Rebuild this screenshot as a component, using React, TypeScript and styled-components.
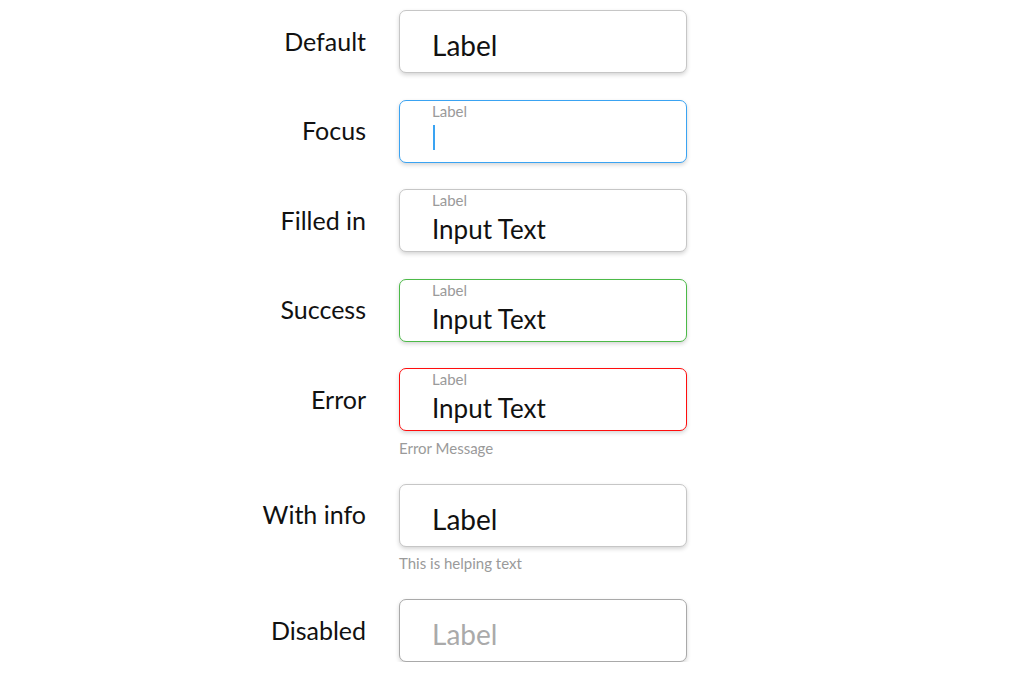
import React from 'react'
import styled, { createGlobalStyle, css } from 'styled-components'

type Status = 'default' | 'focus' | 'success' | 'error' | 'disabled'

const GlobalStyle = createGlobalStyle`
  body {
    margin: 0;
    background: #fff;
    font-family: Lato, "Open Sans", sans-serif;
    color: #111;
  }
`

const borderColors: Record<Status, string> = {
  default: '#c6c6c6',
  focus: '#3aa3f2',
  success: '#4cba48',
  error: '#ff0d0d',
  disabled: '#a9a9a9',
}

const Page = styled.div`
  display: flex;
  flex-direction: column;
  gap: 26.5px;
  padding: 10px 0 0 246px;
`

const Row = styled.div`
  display: grid;
  grid-template-columns: 120px 288px;
  column-gap: 33px;
  align-items: start;
`

const RowLabel = styled.div`
  height: 63px;
  display: flex;
  align-items: center;
  justify-content: flex-end;
  padding-bottom: 2px;
  box-sizing: border-box;
  font-size: 25px;
  color: #111;
`

const Field = styled.div`
  display: flex;
  flex-direction: column;
`

const Box = styled.div<{ $status: Status }>`
  box-sizing: border-box;
  width: 288px;
  height: 63px;
  border: 1.6px solid ${(p) => borderColors[p.$status]};
  border-radius: 7px;
  background: #fff;
  box-shadow: 0 2px 4px rgba(0, 0, 0, 0.17);
  padding: 1px 0 0 32px;
  display: flex;
  flex-direction: column;
`

const SmallLabel = styled.div`
  font-size: 15px;
  line-height: 18px;
  color: #9a9a9a;
`

const Value = styled.div`
  font-size: 26px;
  line-height: 30px;
  margin-top: 5px;
  color: #111;
  display: flex;
  align-items: flex-end;
`

const Placeholder = styled.div<{ $disabled?: boolean }>`
  font-size: 28px;
  line-height: 28px;
  margin-top: 19px;
  ${(p) =>
    p.$disabled
      ? css`
          color: #aaa;
        `
      : css`
          color: #111;
        `}
`

const Cursor = styled.span`
  display: inline-block;
  width: 1.5px;
  height: 25px;
  background: #3aa3f2;
  margin: 0 0 0 1px;
`

const Helper = styled.div`
  font-size: 15px;
  line-height: 17.5px;
  margin-top: 8.5px;
  color: #9a9a9a;
`

interface InputProps {
  status: Status
  label?: string
  value?: string
  placeholder?: string
  caret?: boolean
}

function TextInput(props: InputProps): React.ReactElement {
  const { status, label, value, placeholder, caret } = props
  return (
    <Box $status={status}>
      {placeholder ? (
        <Placeholder $disabled={status === 'disabled'}>{placeholder}</Placeholder>
      ) : (
        <>
          <SmallLabel>{label}</SmallLabel>
          <Value>{caret ? <Cursor /> : value}</Value>
        </>
      )}
    </Box>
  )
}

const rows: Array<{ name: string; input: InputProps; helper?: string }> = [
  { name: 'Default', input: { status: 'default', placeholder: 'Label' } },
  { name: 'Focus', input: { status: 'focus', label: 'Label', caret: true } },
  { name: 'Filled in', input: { status: 'default', label: 'Label', value: 'Input Text' } },
  { name: 'Success', input: { status: 'success', label: 'Label', value: 'Input Text' } },
  {
    name: 'Error',
    input: { status: 'error', label: 'Label', value: 'Input Text' },
    helper: 'Error Message',
  },
  {
    name: 'With info',
    input: { status: 'default', placeholder: 'Label' },
    helper: 'This is helping text',
  },
  { name: 'Disabled', input: { status: 'disabled', placeholder: 'Label' } },
]

export default function App(): React.ReactElement {
  return (
    <>
      <GlobalStyle />
      <Page>
        {rows.map((row) => (
          <Row key={row.name}>
            <RowLabel>{row.name}</RowLabel>
            <Field>
              <TextInput {...row.input} />
              {row.helper && <Helper>{row.helper}</Helper>}
            </Field>
          </Row>
        ))}
      </Page>
    </>
  )
}
